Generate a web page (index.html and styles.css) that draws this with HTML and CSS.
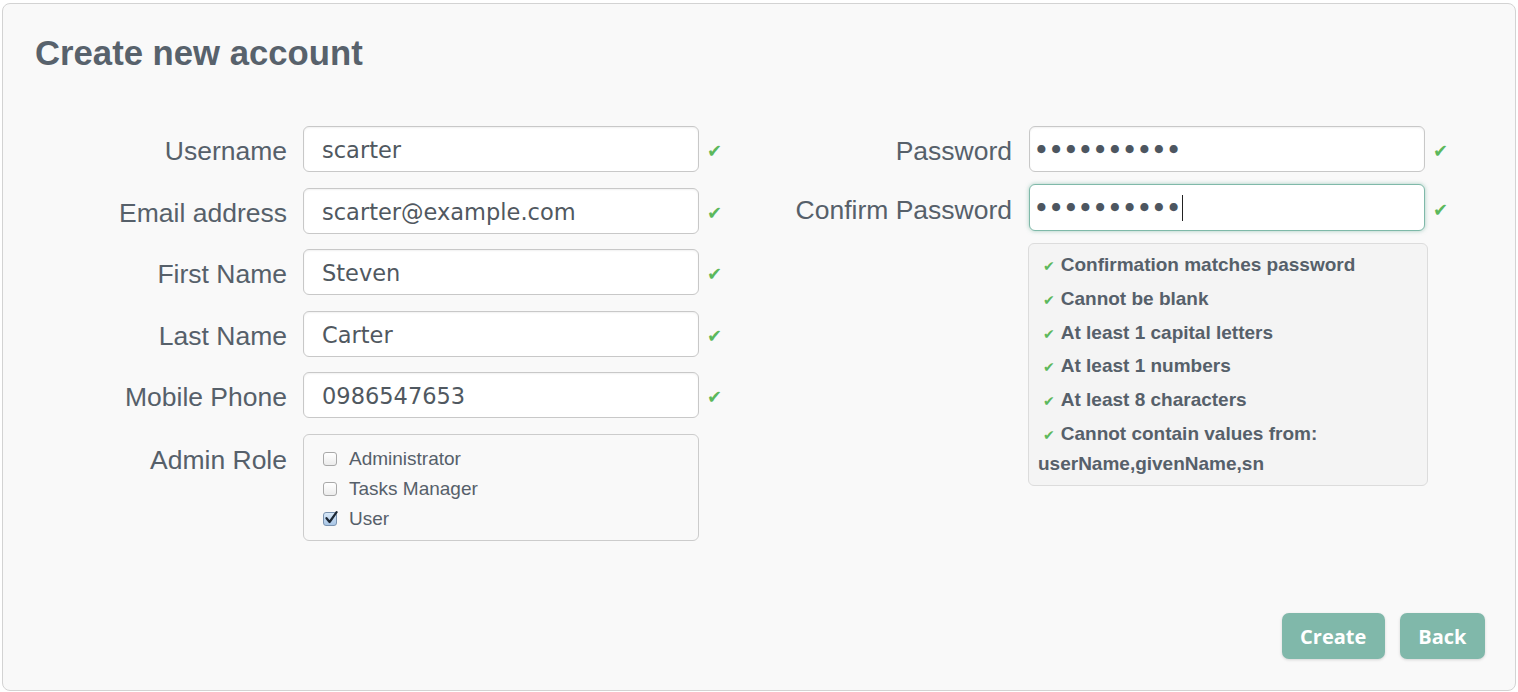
FILE: index.html
```html
<!DOCTYPE html>
<html>
<head>
<meta charset="utf-8">
<title>Create new account</title>
<link rel="stylesheet" href="styles.css">
</head>
<body>
<div class="panel">
  <h1 class="title">Create new account</h1>
  <div class="form">
    <div class="col col-left">
      <label class="label">Username</label>
      <div class="field">scarter</div>
      <span class="ok">✔</span>

      <label class="label">Email address</label>
      <div class="field">scarter@example.com</div>
      <span class="ok">✔</span>

      <label class="label">First Name</label>
      <div class="field">Steven</div>
      <span class="ok">✔</span>

      <label class="label">Last Name</label>
      <div class="field">Carter</div>
      <span class="ok">✔</span>

      <label class="label">Mobile Phone</label>
      <div class="field">0986547653</div>
      <span class="ok">✔</span>

      <label class="label label-top">Admin Role</label>
      <div class="roles">
        <label class="role"><span class="box"></span>Administrator</label>
        <label class="role"><span class="box"></span>Tasks Manager</label>
        <label class="role"><span class="box checked"><svg viewBox="0 0 14 14" width="14" height="14"><path d="M2.5 7.2 L5.6 11 L12.6 1.2" fill="none" stroke="#1b2633" stroke-width="2.2" stroke-linecap="round" stroke-linejoin="round"/></svg></span>User</label>
      </div>
      <span></span>
    </div>

    <div class="col col-right">
      <label class="label">Password</label>
      <div class="field dots">••••••••••</div>
      <span class="ok">✔</span>

      <label class="label">Confirm Password</label>
      <div class="field dots focus">••••••••••<span class="caret"></span></div>
      <span class="ok">✔</span>

      <span></span>
      <ul class="rules">
        <li><span class="tick">✔</span>Confirmation matches password</li>
        <li><span class="tick">✔</span>Cannot be blank</li>
        <li><span class="tick">✔</span>At least 1 capital letters</li>
        <li><span class="tick">✔</span>At least 1 numbers</li>
        <li><span class="tick">✔</span>At least 8 characters</li>
        <li><span class="tick">✔</span>Cannot contain values from: userName,givenName,sn</li>
      </ul>
      <span></span>
    </div>
  </div>
  <div class="actions">
    <button class="btn">Create</button>
    <button class="btn">Back</button>
  </div>
</div>
</body>
</html>
```

FILE: styles.css
```css
html, body {
  margin: 0;
  padding: 0;
  background: #ffffff;
}

body {
  font-family: "Liberation Sans", Arial, sans-serif;
  color: #56606a;
}

.panel {
  box-sizing: border-box;
  margin: 3px 2px 0 2px;
  height: 688px;
  border: 1px solid #d3d3d3;
  border-radius: 8px;
  background: #f9f9f9;
  padding: 29px 30px 31px 32px;
  display: flex;
  flex-direction: column;
}

.title {
  margin: 0;
  font-size: 34.7px;
  line-height: 40px;
  font-weight: bold;
  color: #58626c;
}

.form {
  display: flex;
  margin-top: 53px;
}

.col {
  display: grid;
  align-items: center;
}

.col-left {
  width: 735px;
  grid-template-columns: 268px 396px auto;
  row-gap: 15.5px;
  align-content: start;
}

.col-right {
  grid-template-columns: 259px 396px auto;
  row-gap: 12px;
  align-content: start;
}

.label {
  font-size: 26.5px;
  text-align: right;
  padding-right: 16px;
  padding-top: 5px;
  color: #56606a;
  white-space: nowrap;
}

.col-right .label {
  padding-right: 17px;
}

.label-top {
  align-self: start;
  line-height: 46px;
  padding-top: 3px;
}

.field {
  box-sizing: border-box;
  height: 46px;
  border: 1px solid #c8c8c8;
  border-radius: 6px;
  background: #ffffff;
  box-shadow: inset 0 1px 2px rgba(0, 0, 0, 0.06);
  padding: 0 18px;
  font-family: "DejaVu Sans", Verdana, sans-serif;
  font-size: 22.5px;
  line-height: 46px;
  color: #505860;
}

.dots {
  font-size: 23px;
  font-weight: bold;
  padding-left: 4px;
  color: #4d5660;
  letter-spacing: 0;
}

.focus {
  height: 47px;
  border-color: #7fb9a9;
  box-shadow: 0 0 4px rgba(110, 175, 155, 0.6);
}

.caret {
  display: inline-block;
  width: 1px;
  height: 26px;
  background: #222;
  vertical-align: -5px;
  margin-left: 1px;
}

.ok {
  padding-left: 8px;
  padding-top: 3px;
  font-family: "DejaVu Sans", sans-serif;
  font-size: 18px;
  color: #5cb85c;
}

.roles {
  box-sizing: border-box;
  border: 1px solid #cccccc;
  border-radius: 6px;
  background: #f9f9f9;
  padding: 9px 18px 8px 18px;
  height: 107px;
}

.role {
  display: flex;
  align-items: center;
  height: 30px;
  font-size: 19px;
  color: #56606a;
}

.box {
  box-sizing: border-box;
  width: 14px;
  height: 14px;
  border: 1px solid #a9a9a9;
  border-radius: 3px;
  background: linear-gradient(#ffffff, #ececec);
  margin-right: 12px;
  margin-left: 1px;
  position: relative;
}

.box.checked {
  background: linear-gradient(#d8e8f8, #a9c6e6);
  border-color: #7a93b0;
}

.box svg {
  position: absolute;
  left: 0;
  top: -2px;
}

.rules {
  box-sizing: border-box;
  list-style: none;
  margin: 0 0 0 -1px;
  width: 400px;
  border: 1px solid #dcdcdc;
  border-radius: 6px;
  background: #f4f4f4;
  padding: 6px 12px 6px 9px;
}

.rules li {
  font-size: 19px;
  font-weight: bold;
  line-height: 30px;
  margin-bottom: 3.8px;
  text-indent: 5px;
  color: #56606a;
}

.rules li:last-child {
  margin-bottom: 0;
}

.tick {
  font-family: "DejaVu Sans", sans-serif;
  font-size: 14px;
  line-height: 1;
  color: #5cb85c;
  margin-right: 6px;
  text-indent: 0;
}

.actions {
  margin-top: auto;
  display: flex;
  justify-content: flex-end;
  gap: 15px;
}

.btn {
  height: 46px;
  border: none;
  border-radius: 7px;
  background: #80b8aa;
  color: #ffffff;
  font-family: "Open Sans", sans-serif;
  font-weight: bold;
  font-size: 20px;
  padding: 0 18.5px;
  box-shadow: 0 1px 3px rgba(0, 0, 0, 0.15);
}
```
